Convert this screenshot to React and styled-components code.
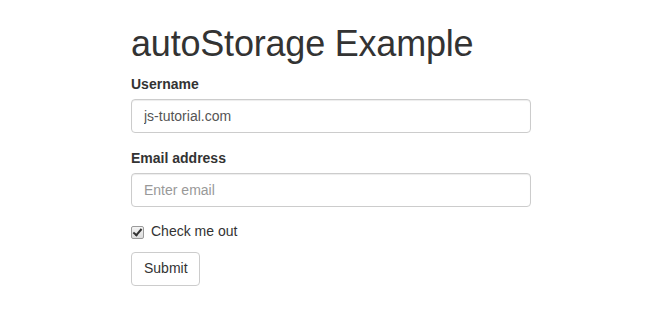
import React from "react";
import styled, { createGlobalStyle } from "styled-components";

const GlobalStyle = createGlobalStyle`
  * { box-sizing: border-box; }
  html, body {
    margin: 0;
    background: #ffffff;
  }
  body {
    font-family: "Liberation Sans", Arial, sans-serif;
    font-size: 14px;
    line-height: 1.42857;
    color: #333333;
  }
`;

const Page = styled.div`
  display: flex;
  justify-content: center;
  padding-left: 2px;
`;

const Container = styled.div`
  width: 400px;
`;

const Title = styled.h1`
  font-size: 36px;
  font-weight: 400;
  line-height: 1.1;
  letter-spacing: -0.2px;
  margin: 24px 0 10px;
  color: #333333;
`;

const FormGroup = styled.div`
  margin-bottom: 15px;
`;

const Label = styled.label`
  display: inline-block;
  max-width: 100%;
  margin-bottom: 5px;
  padding-top: 1px;
  font-weight: 700;
  line-height: 19px;
`;

const Input = styled.input`
  display: block;
  width: 100%;
  height: 34px;
  padding: 6px 12px;
  font-family: inherit;
  font-size: 14px;
  line-height: 1.42857;
  color: #555555;
  background: #ffffff;
  border: 1px solid #cccccc;
  border-radius: 4px;
  box-shadow: inset 0 1px 1px rgba(0, 0, 0, 0.075);
  outline: none;
  &::placeholder {
    color: #999999;
    opacity: 1;
  }
`;

const CheckRow = styled.label`
  display: flex;
  align-items: center;
  height: 20px;
  padding-top: 1px;
  margin: 0 0 10px;
  font-weight: 400;
  cursor: pointer;
`;

const Box = styled.input`
  appearance: none;
  width: 13px;
  height: 13px;
  margin: 0 7px 0 0;
  border: 1px solid #9a9a9a;
  border-radius: 2px;
  background: linear-gradient(#f4f4f4, #dcdcdc);
  position: relative;
  &:checked::after {
    content: "";
    position: absolute;
    left: 3px;
    top: 0px;
    width: 3px;
    height: 7px;
    border: solid #333333;
    border-width: 0 2px 2px 0;
    transform: rotate(40deg);
  }
`;

const Button = styled.button`
  display: inline-block;
  height: 34px;
  padding: 6px 11px 6px 12px;
  font-family: inherit;
  font-size: 14px;
  line-height: 1.42857;
  color: #333333;
  background: #ffffff;
  border: 1px solid #cccccc;
  border-radius: 4px;
  cursor: pointer;
`;

export default function App() {
  return (
    <>
      <GlobalStyle />
      <Page>
        <Container>
          <Title>autoStorage Example</Title>
          <form onSubmit={(e) => e.preventDefault()}>
            <FormGroup>
              <Label htmlFor="username">Username</Label>
              <Input id="username" type="text" defaultValue="js-tutorial.com" />
            </FormGroup>
            <FormGroup>
              <Label htmlFor="email">Email address</Label>
              <Input id="email" type="email" placeholder="Enter email" />
            </FormGroup>
            <CheckRow>
              <Box type="checkbox" defaultChecked />
              Check me out
            </CheckRow>
            <Button type="submit">Submit</Button>
          </form>
        </Container>
      </Page>
    </>
  );
}
